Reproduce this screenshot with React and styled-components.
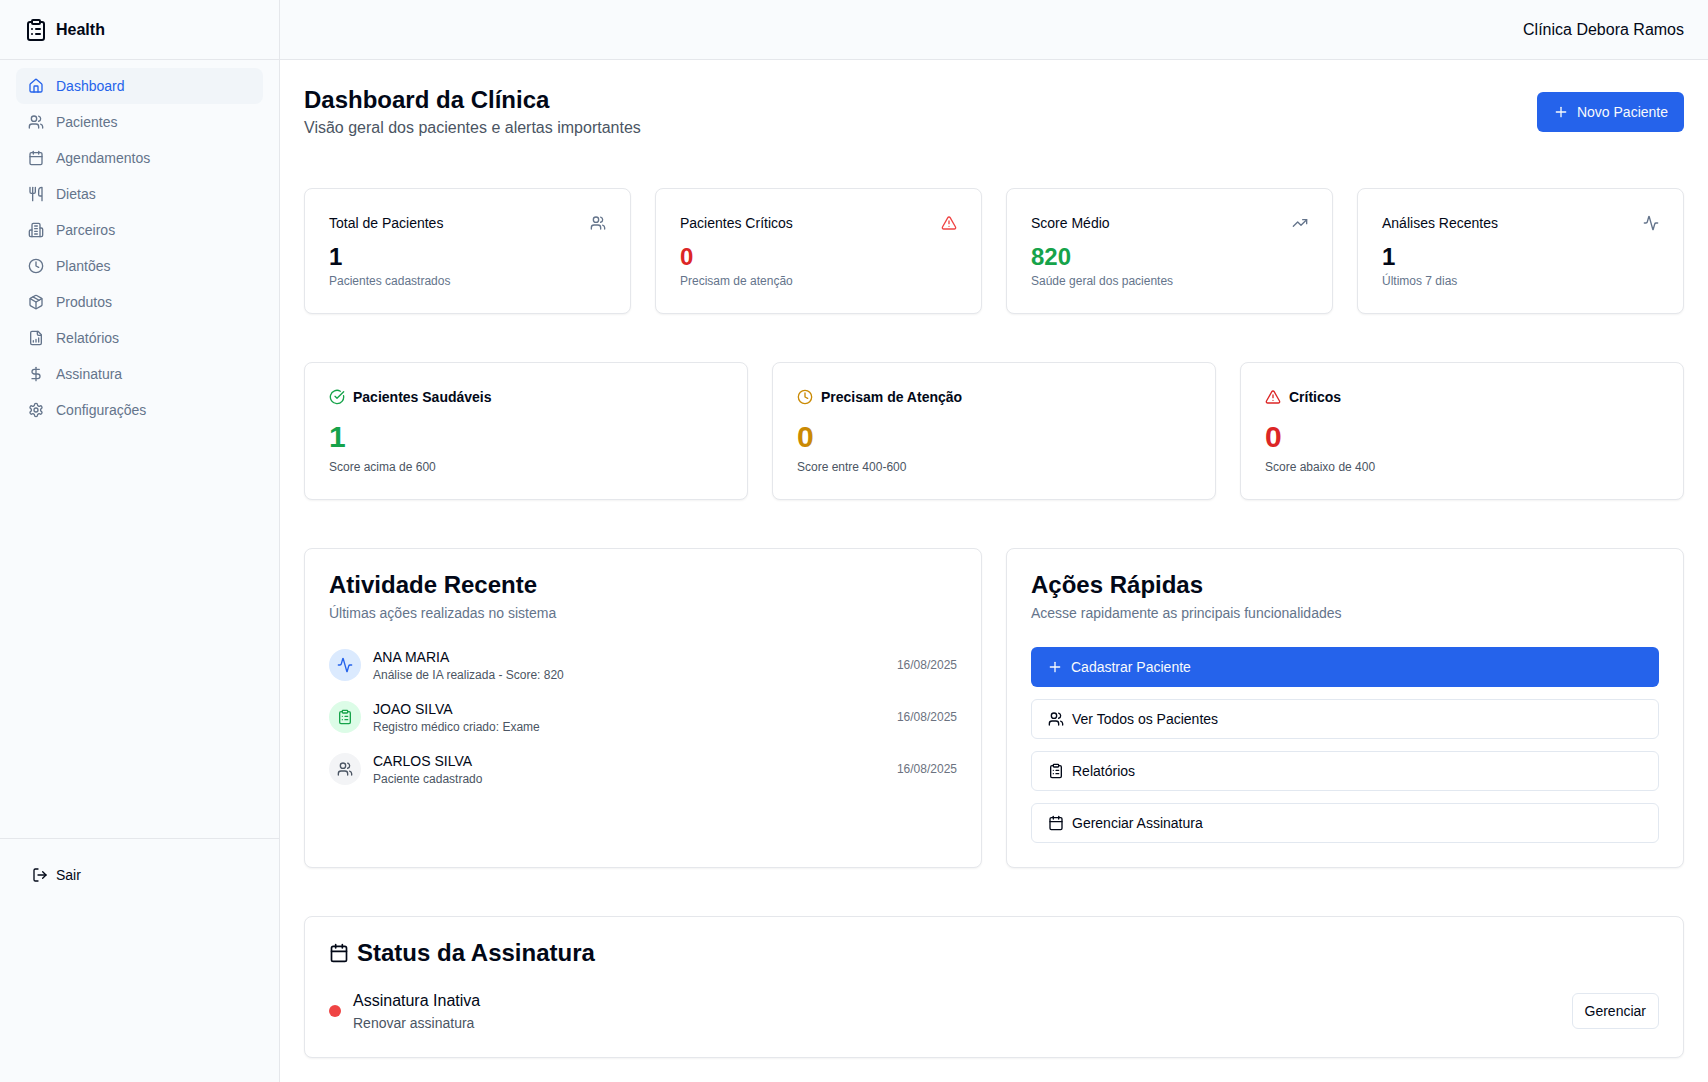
import React from "react";
import styled, { createGlobalStyle } from "styled-components";
import {
  Activity,
  Calendar,
  CircleCheckBig,
  ClipboardList,
  Clock,
  DollarSign,
  House,
  LogOut,
  Package,
  Plus,
  TrendingUp,
  TriangleAlert,
  Users,
  Utensils,
} from "lucide-react";

const colors = {
  text: "#020817",
  muted: "#64748b",
  gray: "#4b5563",
  lightGray: "#6b7280",
  blue: "#2563eb",
  green: "#16a34a",
  yellow: "#ca8a04",
  red: "#dc2626",
  lightRed: "#ef4444",
  border: "#e5e7eb",
  inputBorder: "#e2e8f0",
  panel: "#f9fbfd",
  active: "#f1f5f9",
};

const GlobalStyle = createGlobalStyle`
  *, *::before, *::after {
    box-sizing: border-box;
  }

  body {
    margin: 0;
    background: #fff;
    color: ${colors.text};
    font-family: "Liberation Sans", Arial, sans-serif;
    font-size: 16px;
    line-height: 24px;
  }

  h1, h2, h3, p, ul {
    margin: 0;
    padding: 0;
  }

  ul {
    list-style: none;
  }

  svg {
    flex-shrink: 0;
  }
`;

const Layout = styled.div`
  display: grid;
  grid-template-columns: 280px minmax(0, 1fr);
  min-height: 100vh;
`;

const Sidebar = styled.aside`
  background: ${colors.panel};
  border-right: 1px solid ${colors.border};
`;

const Brand = styled.a`
  display: flex;
  align-items: center;
  gap: 8px;
  height: 60px;
  padding: 0 24px;
  border-bottom: 1px solid ${colors.border};
  color: ${colors.text};
  font-weight: 600;
  text-decoration: none;
`;

const Nav = styled.nav`
  min-height: 778px;
  padding: 8px 16px;
`;

const NavLink = styled.a`
  display: flex;
  align-items: center;
  gap: 12px;
  padding: 8px 12px;
  border-radius: 8px;
  background: ${({ $active }) => ($active ? colors.active : "transparent")};
  color: ${({ $active }) => ($active ? colors.blue : colors.muted)};
  font-size: 14px;
  line-height: 20px;
  text-decoration: none;
`;

const SidebarFooter = styled.div`
  padding: 16px;
  border-top: 1px solid ${colors.border};
`;

const Button = styled.button`
  display: flex;
  align-items: center;
  gap: 8px;
  height: ${({ $small }) => ($small ? "36px" : "40px")};
  padding: 0 ${({ $small }) => ($small ? "12px" : "16px")};
  border: 0;
  border-radius: 6px;
  background: transparent;
  color: ${colors.text};
  font-family: inherit;
  font-size: 14px;
  line-height: 20px;
  white-space: nowrap;
  cursor: pointer;
`;

const PrimaryButton = styled(Button)`
  background: ${colors.blue};
  color: #f8fafc;
`;

const OutlineButton = styled(Button)`
  border: 1px solid ${colors.inputBorder};
  background: #fff;
`;

const Header = styled.header`
  display: flex;
  align-items: center;
  justify-content: flex-end;
  height: 60px;
  padding: 0 24px;
  border-bottom: 1px solid ${colors.border};
  background: ${colors.panel};
`;

const Main = styled.main`
  display: flex;
  flex-direction: column;
  gap: 48px;
  padding: 24px;
`;

const PageHeader = styled.div`
  display: flex;
  align-items: center;
  justify-content: space-between;
`;

const PageTitle = styled.h1`
  font-size: 24px;
  line-height: 32px;
  font-weight: 600;
`;

const PageSubtitle = styled.p`
  color: ${colors.gray};
`;

const Grid = styled.section`
  display: grid;
  grid-template-columns: repeat(${({ $columns }) => $columns}, minmax(0, 1fr));
  gap: 24px;
`;

const Card = styled.div`
  padding: 24px;
  border: 1px solid ${colors.border};
  border-radius: 8px;
  background: #fff;
  box-shadow: 0 1px 2px rgba(0, 0, 0, 0.05);
`;

const StatHeader = styled.div`
  display: flex;
  align-items: center;
  justify-content: space-between;
  margin-bottom: 8px;
`;

const StatTitle = styled.h3`
  font-size: 14px;
  line-height: 20px;
  font-weight: 500;
`;

const StatValue = styled.div`
  color: ${({ $color }) => $color || colors.text};
  font-size: 24px;
  line-height: 32px;
  font-weight: 700;
`;

const Caption = styled.p`
  color: ${({ $color }) => $color || colors.muted};
  font-size: 12px;
  line-height: 16px;
`;

const LevelTitle = styled.h3`
  display: flex;
  align-items: center;
  gap: 8px;
  margin-bottom: 12px;
  font-size: 14px;
  line-height: 20px;
  font-weight: 600;
`;

const LevelValue = styled.div`
  margin-bottom: 4px;
  color: ${({ $color }) => $color};
  font-size: 30px;
  line-height: 36px;
  font-weight: 700;
`;

const CardHeader = styled.div`
  display: flex;
  flex-direction: column;
  gap: 6px;
  margin-bottom: 24px;
`;

const CardTitle = styled.h2`
  display: flex;
  align-items: center;
  gap: 8px;
  font-size: 24px;
  line-height: 24px;
  font-weight: 600;
`;

const CardDescription = styled.p`
  color: ${({ $color }) => $color || colors.muted};
  font-size: 14px;
  line-height: 20px;
`;

const ActivityList = styled.ul`
  display: flex;
  flex-direction: column;
  gap: 16px;
`;

const ActivityItem = styled.li`
  display: flex;
  align-items: center;
  gap: 12px;
`;

const ActivityIcon = styled.span`
  display: flex;
  align-items: center;
  justify-content: center;
  width: 32px;
  height: 32px;
  border-radius: 50%;
  background: ${({ $background }) => $background};
  color: ${({ $color }) => $color};
`;

const ActivityText = styled.div`
  flex: 1;
`;

const ActivityName = styled.p`
  font-size: 14px;
  line-height: 20px;
`;

const ActivityDate = styled.time`
  color: ${colors.lightGray};
  font-size: 12px;
  line-height: 16px;
`;

const Actions = styled.div`
  display: grid;
  gap: 12px;
`;

const SubscriptionRow = styled.div`
  display: flex;
  align-items: center;
  gap: 12px;
`;

const SubscriptionText = styled.div`
  flex: 1;
`;

const StatusDot = styled.span`
  width: 12px;
  height: 12px;
  border-radius: 50%;
  background: ${colors.lightRed};
`;

const StrokeIcon = ({ size = 24, children }) => (
  <svg
    width={size}
    height={size}
    viewBox="0 0 24 24"
    fill="none"
    stroke="currentColor"
    strokeWidth="2"
    strokeLinecap="round"
    strokeLinejoin="round"
    aria-hidden="true"
  >
    {children}
  </svg>
);

const BuildingIcon = ({ size }) => (
  <StrokeIcon size={size}>
    <path d="M6 22V4a2 2 0 0 1 2-2h8a2 2 0 0 1 2 2v18Z" />
    <path d="M6 12H4a2 2 0 0 0-2 2v6a2 2 0 0 0 2 2h2" />
    <path d="M18 9h2a2 2 0 0 1 2 2v9a2 2 0 0 1-2 2h-2" />
    <path d="M10 6h4M10 10h4M10 14h4M10 18h4" />
  </StrokeIcon>
);

const ReportIcon = ({ size }) => (
  <StrokeIcon size={size}>
    <path d="M15 2H6a2 2 0 0 0-2 2v16a2 2 0 0 0 2 2h12a2 2 0 0 0 2-2V7Z" />
    <path d="M14 2v4a2 2 0 0 0 2 2h4" />
    <path d="M8 18v-2M12 18v-4M16 18v-6" />
  </StrokeIcon>
);

const GearIcon = ({ size }) => (
  <StrokeIcon size={size}>
    <path d="M12.22 2h-.44a2 2 0 0 0-2 2v.18a2 2 0 0 1-1 1.73l-.43.25a2 2 0 0 1-2 0l-.15-.08a2 2 0 0 0-2.73.73l-.22.38a2 2 0 0 0 .73 2.73l.15.1a2 2 0 0 1 1 1.72v.51a2 2 0 0 1-1 1.74l-.15.09a2 2 0 0 0-.73 2.73l.22.38a2 2 0 0 0 2.73.73l.15-.08a2 2 0 0 1 2 0l.43.25a2 2 0 0 1 1 1.73V20a2 2 0 0 0 2 2h.44a2 2 0 0 0 2-2v-.18a2 2 0 0 1 1-1.73l.43-.25a2 2 0 0 1 2 0l.15.08a2 2 0 0 0 2.73-.73l.22-.39a2 2 0 0 0-.73-2.73l-.15-.08a2 2 0 0 1-1-1.74v-.5a2 2 0 0 1 1-1.74l.15-.09a2 2 0 0 0 .73-2.73l-.22-.38a2 2 0 0 0-2.73-.73l-.15.08a2 2 0 0 1-2 0l-.43-.25a2 2 0 0 1-1-1.73V4a2 2 0 0 0-2-2z" />
    <circle cx="12" cy="12" r="3" />
  </StrokeIcon>
);

const navItems = [
  { label: "Dashboard", icon: House, active: true },
  { label: "Pacientes", icon: Users },
  { label: "Agendamentos", icon: Calendar },
  { label: "Dietas", icon: Utensils },
  { label: "Parceiros", icon: BuildingIcon },
  { label: "Plantões", icon: Clock },
  { label: "Produtos", icon: Package },
  { label: "Relatórios", icon: ReportIcon },
  { label: "Assinatura", icon: DollarSign },
  { label: "Configurações", icon: GearIcon },
];

const stats = [
  { title: "Total de Pacientes", value: 1, caption: "Pacientes cadastrados", icon: Users },
  {
    title: "Pacientes Críticos",
    value: 0,
    caption: "Precisam de atenção",
    icon: TriangleAlert,
    color: colors.red,
    iconColor: colors.lightRed,
  },
  {
    title: "Score Médio",
    value: 820,
    caption: "Saúde geral dos pacientes",
    icon: TrendingUp,
    color: colors.green,
  },
  { title: "Análises Recentes", value: 1, caption: "Últimos 7 dias", icon: Activity },
];

const levels = [
  {
    title: "Pacientes Saudáveis",
    value: 1,
    caption: "Score acima de 600",
    icon: CircleCheckBig,
    color: colors.green,
  },
  {
    title: "Precisam de Atenção",
    value: 0,
    caption: "Score entre 400-600",
    icon: Clock,
    color: colors.yellow,
  },
  {
    title: "Críticos",
    value: 0,
    caption: "Score abaixo de 400",
    icon: TriangleAlert,
    color: colors.red,
  },
];

const activities = [
  {
    name: "ANA MARIA",
    text: "Análise de IA realizada - Score: 820",
    icon: Activity,
    color: colors.blue,
    background: "#dbeafe",
  },
  {
    name: "JOAO SILVA",
    text: "Registro médico criado: Exame",
    icon: ClipboardList,
    color: colors.green,
    background: "#dcfce7",
  },
  {
    name: "CARLOS SILVA",
    text: "Paciente cadastrado",
    icon: Users,
    color: colors.gray,
    background: "#f3f4f6",
  },
];

const App = () => {
  return (
    <>
      <GlobalStyle />
      <Layout>
        <Sidebar>
          <Brand href="#">
            <ClipboardList size={24} />
            <span>Health</span>
          </Brand>
          <Nav>
            {navItems.map(({ label, icon: Icon, active }) => (
              <NavLink key={label} href="#" $active={active}>
                <Icon size={16} />
                {label}
              </NavLink>
            ))}
          </Nav>
          <SidebarFooter>
            <Button type="button">
              <LogOut size={16} />
              Sair
            </Button>
          </SidebarFooter>
        </Sidebar>

        <div>
          <Header>
            <span>Clínica Debora Ramos</span>
          </Header>
          <Main>
            <PageHeader>
              <div>
                <PageTitle>Dashboard da Clínica</PageTitle>
                <PageSubtitle>Visão geral dos pacientes e alertas importantes</PageSubtitle>
              </div>
              <PrimaryButton type="button">
                <Plus size={16} />
                Novo Paciente
              </PrimaryButton>
            </PageHeader>

            <Grid $columns={4}>
              {stats.map(({ title, value, caption, icon: Icon, color, iconColor }) => (
                <Card key={title}>
                  <StatHeader>
                    <StatTitle>{title}</StatTitle>
                    <Icon size={16} color={iconColor || colors.muted} />
                  </StatHeader>
                  <StatValue $color={color}>{value}</StatValue>
                  <Caption>{caption}</Caption>
                </Card>
              ))}
            </Grid>

            <Grid $columns={3}>
              {levels.map(({ title, value, caption, icon: Icon, color }) => (
                <Card key={title}>
                  <LevelTitle>
                    <Icon size={16} color={color} />
                    {title}
                  </LevelTitle>
                  <LevelValue $color={color}>{value}</LevelValue>
                  <Caption $color={colors.gray}>{caption}</Caption>
                </Card>
              ))}
            </Grid>

            <Grid $columns={2}>
              <Card>
                <CardHeader>
                  <CardTitle>Atividade Recente</CardTitle>
                  <CardDescription>Últimas ações realizadas no sistema</CardDescription>
                </CardHeader>
                <ActivityList>
                  {activities.map(({ name, text, icon: Icon, color, background }) => (
                    <ActivityItem key={name}>
                      <ActivityIcon $color={color} $background={background}>
                        <Icon size={16} />
                      </ActivityIcon>
                      <ActivityText>
                        <ActivityName>{name}</ActivityName>
                        <Caption $color={colors.gray}>{text}</Caption>
                      </ActivityText>
                      <ActivityDate dateTime="2025-08-16">16/08/2025</ActivityDate>
                    </ActivityItem>
                  ))}
                </ActivityList>
              </Card>

              <Card>
                <CardHeader>
                  <CardTitle>Ações Rápidas</CardTitle>
                  <CardDescription>Acesse rapidamente as principais funcionalidades</CardDescription>
                </CardHeader>
                <Actions>
                  <PrimaryButton type="button">
                    <Plus size={16} />
                    Cadastrar Paciente
                  </PrimaryButton>
                  <OutlineButton type="button">
                    <Users size={16} />
                    Ver Todos os Pacientes
                  </OutlineButton>
                  <OutlineButton type="button">
                    <ClipboardList size={16} />
                    Relatórios
                  </OutlineButton>
                  <OutlineButton type="button">
                    <Calendar size={16} />
                    Gerenciar Assinatura
                  </OutlineButton>
                </Actions>
              </Card>
            </Grid>

            <Card>
              <CardHeader>
                <CardTitle>
                  <Calendar size={20} />
                  Status da Assinatura
                </CardTitle>
              </CardHeader>
              <SubscriptionRow>
                <StatusDot />
                <SubscriptionText>
                  <p>Assinatura Inativa</p>
                  <CardDescription $color={colors.gray}>Renovar assinatura</CardDescription>
                </SubscriptionText>
                <OutlineButton type="button" $small>
                  Gerenciar
                </OutlineButton>
              </SubscriptionRow>
            </Card>
          </Main>
        </div>
      </Layout>
    </>
  );
};

export default App;
